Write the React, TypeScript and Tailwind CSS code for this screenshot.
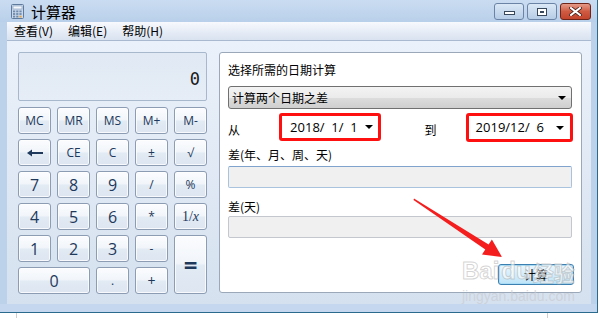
import React from "react";

const cjk = "font-['Noto_Sans_CJK_SC',sans-serif]";
const ui = "font-['Open_Sans','Noto_Sans',sans-serif]";

function Key({ children, className = "" }: { children: React.ReactNode; className?: string }) {
  return (
    <div
      className={`flex items-center justify-center rounded-[3px] border border-[#8c9cb3] bg-[linear-gradient(to_bottom,#fbfcfe_0%,#f1f5fa_48%,#e2eaf4_52%,#dde6f1_100%)] text-[#1e395b] shadow-[inset_0_0_0_1px_rgba(255,255,255,0.75)] ${className}`}
    >
      {children}
    </div>
  );
}

function BackArrow() {
  return (
    <svg width="16" height="8" viewBox="0 0 16 8">
      <polygon points="0,4 5,0.5 5,7.5" fill="#1e395b" />
      <rect x="4" y="3" width="12" height="2" fill="#1e395b" />
    </svg>
  );
}

function CalcIcon() {
  return (
    <svg width="13" height="15" viewBox="0 0 13 15">
      <rect x="0.5" y="0.5" width="12" height="14" rx="1" fill="#c9d8ea" stroke="#5f7a9c" />
      <rect x="2" y="2" width="9" height="3" fill="#f4f8fc" stroke="#7f98b8" strokeWidth="0.6" />
      {[0, 1, 2].map((r) =>
        [0, 1, 2].map((c) => (
          <rect key={`${r}-${c}`} x={2 + c * 3.2} y={6.5 + r * 2.6} width="2.2" height="1.8" fill={c === 2 && r === 2 ? "#e8a040" : "#6f89ab"} />
        ))
      )}
    </svg>
  );
}

function DownTri() {
  return (
    <svg width="8" height="4" viewBox="0 0 8 4">
      <polygon points="0,0 8,0 4,4" fill="#000" />
    </svg>
  );
}

export default function App() {
  const memRow = ["MC", "MR", "MS", "M+", "M-"];

  return (
    <div className={`relative h-[318px] w-[602px] overflow-hidden bg-white text-black ${cjk}`}>
      {/* window */}
      <div className="flex h-[313px] w-[598px] flex-col border-b border-r border-[#2a6a8c]">
        {/* title bar */}
        <div className="flex h-[22px] items-center bg-gradient-to-b from-[#cadcf1] to-[#b9d0ea]">
          <div className="ml-[11px] flex">
            <CalcIcon />
          </div>
          <span className="ml-[7px] text-[15px] leading-none">计算器</span>
          <div className="ml-auto mr-[6px] flex gap-[3px] self-start pt-[3px]">
            <div className="flex h-[17px] w-[30px] items-end justify-center rounded-[3px] border border-[#6b84a6] bg-gradient-to-b from-[#dbe8f6] to-[#b6cce6] pb-[4px]">
              <div className="h-[4px] w-[11px] border border-[#39475a] bg-white" />
            </div>
            <div className="flex h-[17px] w-[30px] items-center justify-center rounded-[3px] border border-[#6b84a6] bg-gradient-to-b from-[#dbe8f6] to-[#b6cce6]">
              <div className="flex h-[8px] w-[10px] items-center justify-center border border-[#39475a] bg-white">
                <div className="h-[2px] w-[4px] bg-[#39475a]" />
              </div>
            </div>
            <div className="flex h-[17px] w-[31px] items-center justify-center rounded-[3px] border border-[#6e2418] bg-gradient-to-b from-[#e49a88] via-[#cf5a42] to-[#c2442c]">
              <svg width="13" height="9" viewBox="0 0 13 9">
                <path d="M2 1 L11 8 M11 1 L2 8" stroke="#4a2018" strokeWidth="3.6" strokeLinecap="square" />
                <path d="M2 1 L11 8 M11 1 L2 8" stroke="#ffffff" strokeWidth="2" strokeLinecap="square" />
              </svg>
            </div>
          </div>
        </div>

        {/* body */}
        <div className="flex flex-1">
          <div className="w-[7px] bg-[#bcd2eb]" />
          <div className="flex w-[584px] flex-col">
            {/* menu */}
            <div className="flex h-[19px] items-center gap-[15px] border-b border-[#a9b9cf] bg-gradient-to-b from-[#f7f9fd] to-[#d9e2f0] pl-[7px] text-[12px] leading-none">
              <span>查看(V)</span>
              <span>编辑(E)</span>
              <span>帮助(H)</span>
            </div>

            {/* client */}
            <div className="flex h-[263px] gap-[12px] bg-gradient-to-b from-[#ebf1fa] to-[#d5e1ef] pl-[11px] pt-[11px]">
              {/* calculator */}
              <div className="flex w-[189px] flex-col gap-[6px]">
                <div className="flex h-[49px] items-center justify-end rounded-[2px] border border-[#a7b8cd] bg-gradient-to-b from-[#e0e9f4] to-[#e6edf6] pr-[6px] pt-[6px]">
                  <span className="font-['DejaVu_Sans_Mono',monospace] text-[17px] leading-none text-[#1a1a1a]">0</span>
                </div>
                <div className={`grid grid-cols-[repeat(5,33px)] auto-rows-[27px] gap-x-[6px] gap-y-[5px] ${ui}`}>
                  {memRow.map((k) => (
                    <Key key={k} className="text-[12px] leading-none">{k}</Key>
                  ))}
                  <Key><BackArrow /></Key>
                  <Key className="text-[12px] leading-none">CE</Key>
                  <Key className="text-[12px] leading-none">C</Key>
                  <Key className="text-[12px] leading-none">±</Key>
                  <Key className="text-[12px] leading-none">√</Key>

                  <Key className="text-[16px] leading-none">7</Key>
                  <Key className="text-[16px] leading-none">8</Key>
                  <Key className="text-[16px] leading-none">9</Key>
                  <Key className="text-[12px] leading-none">/</Key>
                  <Key className="text-[12px] leading-none">%</Key>

                  <Key className="text-[16px] leading-none">4</Key>
                  <Key className="text-[16px] leading-none">5</Key>
                  <Key className="text-[16px] leading-none">6</Key>
                  <Key className="text-[12px] leading-none">*</Key>
                  <Key className="font-['Liberation_Serif',serif] text-[14px] leading-none">
                    1/<i>x</i>
                  </Key>

                  <Key className="text-[16px] leading-none">1</Key>
                  <Key className="text-[16px] leading-none">2</Key>
                  <Key className="text-[16px] leading-none">3</Key>
                  <Key className="text-[12px] leading-none">-</Key>
                  <Key className="row-span-2 bg-[linear-gradient(to_bottom,#f4f7fb_0%,#e6edf5_45%,#d9e3ef_55%,#d6e0ed_100%)] text-[24px] font-bold leading-none">
                    =
                  </Key>

                  <Key className="col-span-2 text-[16px] leading-none">0</Key>
                  <Key className="text-[12px] leading-none">.</Key>
                  <Key className="text-[14px] leading-none">+</Key>
                </div>
              </div>

              {/* date panel */}
              <div className="flex h-[241px] w-[363px] flex-col rounded-[3px] border border-[#9aa8ba] bg-white pl-[8px] pr-[8px] pt-[9px] text-[12px] leading-[16px]">
                <span>选择所需的日期计算</span>
                <div className="mt-[8px] flex h-[23px] w-[344px] items-center justify-between rounded-[3px] border border-[#707070] bg-[linear-gradient(to_bottom,#f3f3f3_0%,#ebebeb_50%,#dddddd_51%,#cfcfcf_100%)] pl-[3px] pr-[5px]">
                  <span>计算两个日期之差</span>
                  <DownTri />
                </div>

                <div className="mt-[4px] flex h-[29px] items-center">
                  <span className="mt-[4px] w-[52px]">从</span>
                  <div className="flex h-[28px] w-[103px] items-center justify-between self-start rounded-[3px] border-[3px] border-[#ff1010] bg-white pl-[8px] pr-[5px]">
                    <span className={`${ui} whitespace-pre text-[13px] leading-none`}>2018/  1/  1</span>
                    <DownTri />
                  </div>
                  <span className="ml-[44px] mt-[4px]">到</span>
                  <div className="ml-[29px] flex h-[29px] w-[109px] items-center justify-between rounded-[3px] border-[3px] border-[#ff1010] bg-white pl-[7px] pr-[6px]">
                    <span className={`${ui} whitespace-pre text-[13px] leading-none`}>2019/12/  6</span>
                    <DownTri />
                  </div>
                </div>

                <span className="mt-[5px]">差(年、月、周、天)</span>
                <div className="mt-[3px] h-[22px] w-[344px] rounded-[2px] border border-[#a9c3df] border-t-[#7fa3cc] bg-[#f0f0f0]" />

                <span className="mt-[11px]">差(天)</span>
                <div className="mt-[1px] h-[22px] w-[344px] rounded-[2px] border border-[#c4c8ce] bg-[#f0f0f0]" />

                <div className="mr-[-1px] mt-[26px] flex h-[21px] w-[76px] items-center justify-center self-end rounded-[3px] border border-[#3c7fb1] bg-gradient-to-b from-[#eaf6fd] to-[#bee4f8] shadow-[inset_0_0_0_1px_#a9dcf6]">
                  计算
                </div>
              </div>
            </div>
          </div>
          <div className="w-[6px] bg-[#bcd2eb]" />
        </div>
        <div className="h-[8px] bg-[#c4d7ee]" />
      </div>

      {/* page behind the window */}
      <div className="flex h-[5px]">
        <div className="w-[16px]" />
        <div className="w-[532px] border-l border-r border-[#cfcfcf]" />
      </div>

      {/* annotation arrow */}
      <svg className="pointer-events-none absolute left-0 top-0" width="602" height="318" viewBox="0 0 602 318">
        <polygon
          points="414,198.5 488.6,244.6 491.9,239.6 502,257 482,254.6 485.3,249.6 413.5,200"
          fill="#f41e1e"
        />
      </svg>

      {/* watermark */}
      <div className="pointer-events-none absolute left-[462px] top-[259px] flex items-end font-['Liberation_Sans',sans-serif] text-[24px] font-bold leading-none text-white/60 [-webkit-text-stroke:1px_rgba(160,160,160,0.45)]">
        <span>Bai</span>
        <span className="ml-[2px]">du</span>
        <span className={`${cjk} ml-[2px] text-[21px]`}>经验</span>
      </div>
      <div className="pointer-events-none absolute left-[462px] top-[289px] font-['Liberation_Sans',sans-serif] text-[14px] leading-none text-[#c9ccd2]/70">
        jingyan.baidu.com
      </div>
    </div>
  );
}
